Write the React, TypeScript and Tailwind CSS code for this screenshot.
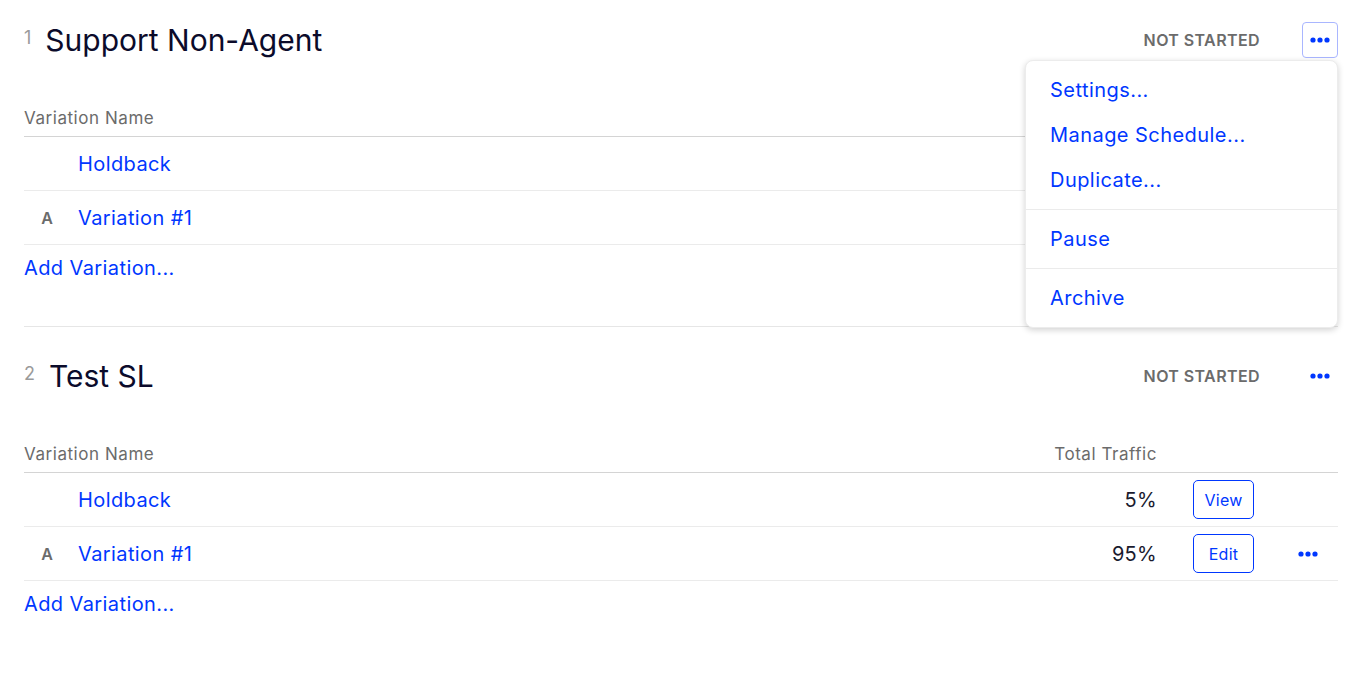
import { Fragment } from "react";

type Row = { letter?: string; name: string; traffic: string; action: string; menu?: boolean };

type Experiment = { index: number; title: string; status: string; rows: Row[] };

const EXPERIMENTS: Experiment[] = [
    {
        index: 1,
        title: "Support Non-Agent",
        status: "NOT STARTED",
        rows: [
            { name: "Holdback", traffic: "5%", action: "View" },
            { letter: "A", name: "Variation #1", traffic: "95%", action: "Edit", menu: true },
        ],
    },
    {
        index: 2,
        title: "Test SL",
        status: "NOT STARTED",
        rows: [
            { name: "Holdback", traffic: "5%", action: "View" },
            { letter: "A", name: "Variation #1", traffic: "95%", action: "Edit", menu: true },
        ],
    },
];

const MENU_GROUPS = [["Settings...", "Manage Schedule...", "Duplicate..."], ["Pause"], ["Archive"]];

function Dots() {
    return (
        <svg width="20" height="6" viewBox="0 0 20 6" aria-hidden>
            <circle cx="3" cy="3" r="2.6" fill="#0037ff" />
            <circle cx="10" cy="3" r="2.6" fill="#0037ff" />
            <circle cx="17" cy="3" r="2.6" fill="#0037ff" />
        </svg>
    );
}

function ActionMenu() {
    return (
        <div className="absolute right-0 top-[60px] z-10 w-[313px] rounded-lg border border-[#ececec] bg-white shadow-[0_2px_6px_rgba(0,0,0,0.18)]">
            {MENU_GROUPS.map((group, i) => (
                <Fragment key={i}>
                    {i > 0 && <div className="h-px bg-[#ebebeb]" />}
                    <div className={i === 0 ? "pt-[6px] pb-[7px]" : "py-[7px]"}>
                        {group.map((item) => (
                            <div
                                key={item}
                                className={`flex items-center px-6 text-[20px] tracking-[0.45px] text-[#0037ff] ${i === 0 ? "h-[45px]" : "h-[44px]"}`}
                            >
                                {item}
                            </div>
                        ))}
                    </div>
                </Fragment>
            ))}
        </div>
    );
}

function ExperimentSection({ exp, first, last, open }: { exp: Experiment; first: boolean; last: boolean; open: boolean }) {
    return (
        <section className={`relative pb-9 ${last ? "" : "border-b border-[#e6e6e6]"} ${first ? "pt-5" : "pt-[29px]"}`}>
            <div className="flex h-10 items-center">
                <span className="mr-[14px] self-start mt-[9px] text-[18px] leading-none text-[#9a9a9a]">{exp.index}</span>
                <h2 className="flex-1 text-[30px] leading-none text-[#0b0b2b]">{exp.title}</h2>
                <span className="text-[16px] font-semibold tracking-[0.4px] text-[#6b6b6b]">{exp.status}</span>
                <button
                    type="button"
                    className={`ml-[42px] flex h-9 w-9 items-center justify-center rounded-[4px] border ${open ? "border-[#a9b6ff]" : "border-transparent"}`}
                >
                    <Dots />
                </button>
            </div>

            <div className="mt-[41px]">
                <div className="flex h-9 items-center border-b border-[#d4d4d4] text-[17px] tracking-[0.55px] text-[#6b6b6b]">
                    <span className="flex-1">Variation Name</span>
                    <span className="w-[150px] text-right">Total Traffic</span>
                    <span className="w-[181px]" />
                </div>
                {exp.rows.map((row) => (
                    <div key={row.name} className="flex h-[54px] items-center border-b border-[#ebebeb]">
                        <span className="w-[46px] text-center text-[16px] font-semibold text-[#6b6b6b]">{row.letter ?? ""}</span>
                        <a className="flex-1 pl-2 text-[20px] tracking-[0.4px] text-[#0037ff]">{row.name}</a>
                        <span className="w-[150px] text-right text-[20px] tracking-[0.3px] text-[#1a1a2e]">{row.traffic}</span>
                        <div className="flex w-[181px] items-center">
                            <button
                                type="button"
                                className="ml-9 h-[39px] w-[61px] rounded-[5px] border border-[#0037ff] text-[16px] tracking-[0.3px] text-[#0037ff]"
                            >
                                {row.action}
                            </button>
                            <span className="ml-auto mr-5 flex">{row.menu && <Dots />}</span>
                        </div>
                    </div>
                ))}
                <div className="flex h-[45px] items-center">
                    <a className="text-[20px] tracking-[0.4px] text-[#0037ff]">Add Variation...</a>
                </div>
            </div>

            {open && <ActionMenu />}
        </section>
    );
}

export default function App() {
    return (
        <div className="min-h-screen bg-white pl-6 pr-[17px]" style={{ fontFamily: "Inter, 'Noto Sans', sans-serif" }}>
            {EXPERIMENTS.map((exp, i) => (
                <ExperimentSection
                    key={exp.index}
                    exp={exp}
                    first={i === 0}
                    last={i === EXPERIMENTS.length - 1}
                    open={i === 0}
                />
            ))}
        </div>
    );
}
